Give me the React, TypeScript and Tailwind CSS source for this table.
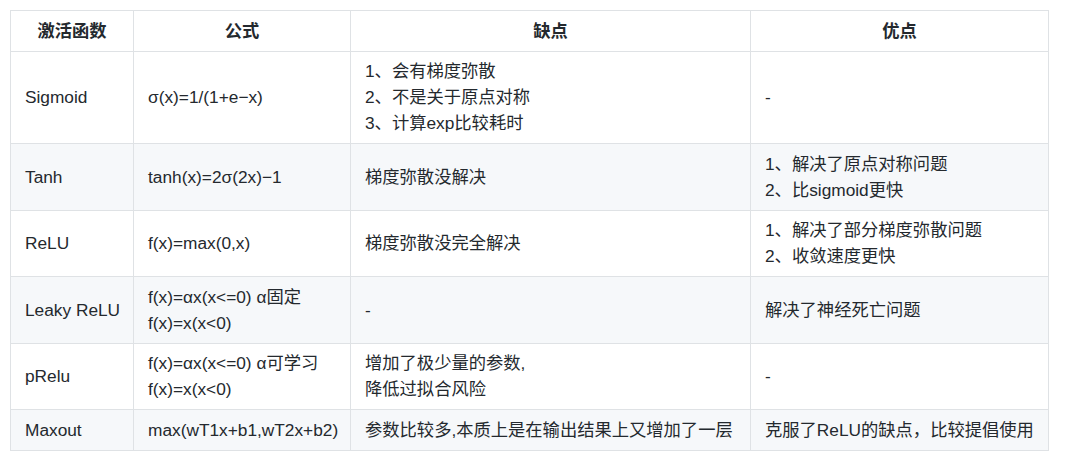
import React from "react";

const rows: { name: string; formula: string[]; cons: string[]; pros: string[] }[] = [
  { name: "Sigmoid", formula: ["σ(x)=1/(1+e−x)"], cons: ["1、会有梯度弥散", "2、不是关于原点对称", "3、计算exp比较耗时"], pros: ["-"] },
  { name: "Tanh", formula: ["tanh(x)=2σ(2x)−1"], cons: ["梯度弥散没解决"], pros: ["1、解决了原点对称问题", "2、比sigmoid更快"] },
  { name: "ReLU", formula: ["f(x)=max(0,x)"], cons: ["梯度弥散没完全解决"], pros: ["1、解决了部分梯度弥散问题", "2、收敛速度更快"] },
  { name: "Leaky ReLU", formula: ["f(x)=αx(x<=0) α固定", "f(x)=x(x<0)"], cons: ["-"], pros: ["解决了神经死亡问题"] },
  { name: "pRelu", formula: ["f(x)=αx(x<=0) α可学习", "f(x)=x(x<0)"], cons: ["增加了极少量的参数,", "降低过拟合风险"], pros: ["-"] },
  { name: "Maxout", formula: ["max(wT1x+b1,wT2x+b2)"], cons: ["参数比较多,本质上是在输出结果上又增加了一层"], pros: ["克服了ReLU的缺点，比较提倡使用"] },
];

function Lines({ items }: { items: string[] }) {
  return (
    <>
      {items.map((t, i) => (
        <div key={i}>{t}</div>
      ))}
    </>
  );
}

export default function App() {
  const td = "border border-[#dfe2e5] px-[14px] py-[6.75px] align-middle whitespace-nowrap";
  return (
    <div
      className="w-[1080px] h-[471px] bg-white pt-[10px] pl-[10px] text-[#24292e] text-[17.3px] leading-[26px]"
      style={{ fontFamily: '"Liberation Sans", "Noto Sans CJK SC", sans-serif' }}
    >
      <table className="border-collapse w-[1038px] table-fixed">
        <colgroup>
          <col className="w-[123px]" />
          <col className="w-[217px]" />
          <col className="w-[400px]" />
          <col className="w-[298px]" />
        </colgroup>
        <thead>
          <tr className="bg-white">
            <th className={`${td} text-center font-bold`}>激活函数</th>
            <th className={`${td} text-center font-bold`}>公式</th>
            <th className={`${td} text-center font-bold`}>缺点</th>
            <th className={`${td} text-center font-bold`}>优点</th>
          </tr>
        </thead>
        <tbody>
          {rows.map((r, i) => (
            <tr key={r.name} className={i % 2 === 1 ? "bg-[#f6f8fa]" : "bg-white"}>
              <td className={td}>{r.name}</td>
              <td className={td}>
                <Lines items={r.formula} />
              </td>
              <td className={td}>
                <Lines items={r.cons} />
              </td>
              <td className={td}>
                <Lines items={r.pros} />
              </td>
            </tr>
          ))}
        </tbody>
      </table>
    </div>
  );
}
